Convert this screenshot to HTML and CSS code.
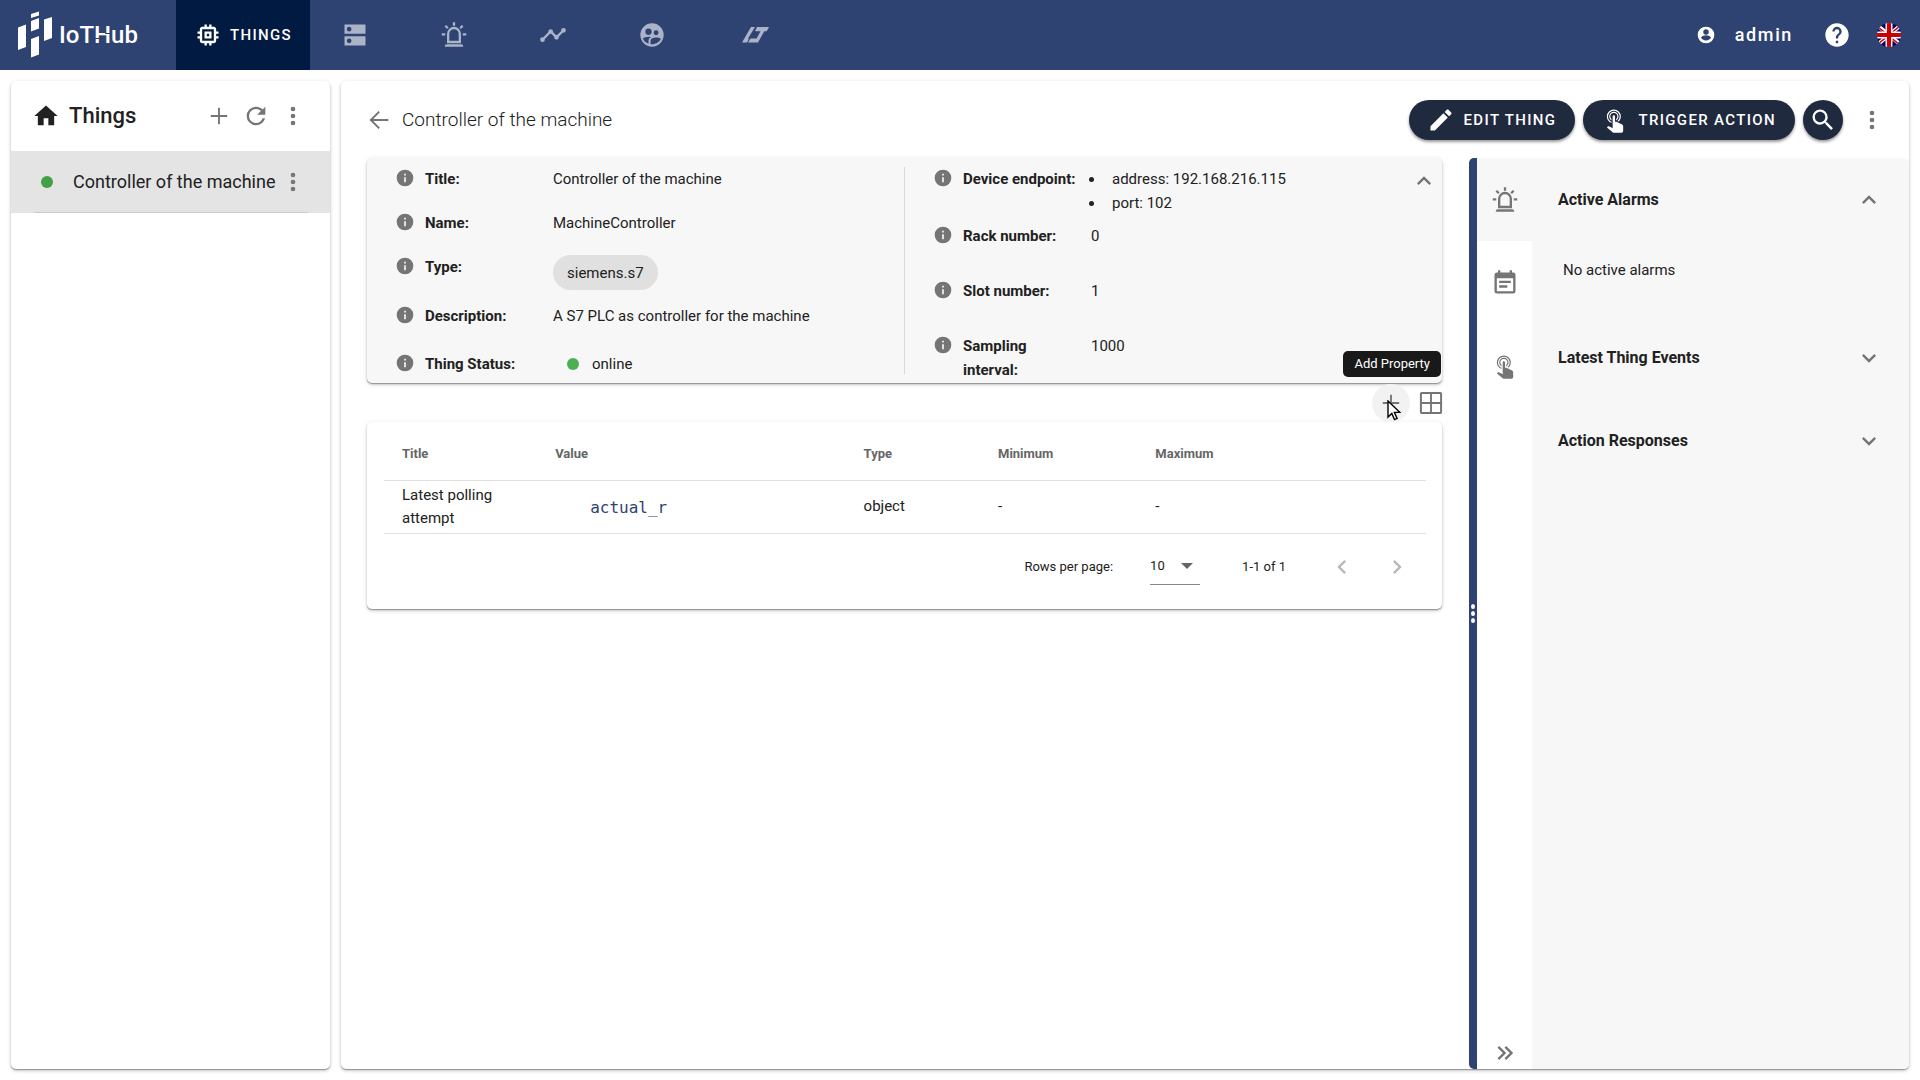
FILE: index.html
```html
<!DOCTYPE html>
<html lang="en">
<head>
<meta charset="utf-8">
<title>IoTHub</title>
<link rel="stylesheet" href="styles.css">
</head>
<body>
<svg class="defs" aria-hidden="true">
  <symbol id="alarm" viewBox="0 0 24 24"><path d="M6 6.900 3.870 4.780l1.410-1.410L7.400 5.500zM13 1v3h-2V1zm7.130 3.780L18 6.900l-1.400-1.400 2.120-2.130zM4.500 10.500v2h-3v-2zm15 0h3v2h-3zM6 20h12a2 2 0 0 1 2 2H4a2 2 0 0 1 2-2m6-15a6 6 0 0 1 6 6v8H6v-8a6 6 0 0 1 6-6m0 2a4 4 0 0 0-4 4v6h8v-6a4 4 0 0 0-4-4z"/></symbol>
  <symbol id="dots" viewBox="0 0 24 24"><path d="M12 16a2 2 0 0 1 2 2 2 2 0 0 1-2 2 2 2 0 0 1-2-2 2 2 0 0 1 2-2m0-6a2 2 0 0 1 2 2 2 2 0 0 1-2 2 2 2 0 0 1-2-2 2 2 0 0 1 2-2m0-6a2 2 0 0 1 2 2 2 2 0 0 1-2 2 2 2 0 0 1-2-2 2 2 0 0 1 2-2z"/></symbol>
  <symbol id="info" viewBox="0 0 24 24"><path d="M13 9h-2V7h2m0 10h-2v-6h2m-1-9A10 10 0 0 0 2 12a10 10 0 0 0 10 10 10 10 0 0 0 10-10A10 10 0 0 0 12 2z"/></symbol>
  <symbol id="plus" viewBox="0 0 24 24"><path d="M19 12.800h-6.200V19h-1.600v-6.200H5v-1.600h6.200V5h1.600v6.200H19z"/></symbol>
  <symbol id="tap" viewBox="0 0 24 24"><path d="M10 9a1 1 0 0 1 1-1 1 1 0 0 1 1 1v4.470l1.210.13 4.940 2.190c.53.240.850.770.850 1.350v4.360c-.03.820-.68 1.470-1.500 1.500H11c-.380 0-.74-.15-1-.43l-4.900-4.200.74-.77c.190-.210.460-.320.740-.320h.22L10 19zm1-4a4 4 0 0 1 4 4c0 1.500-.8 2.770-2 3.460v-1.220c.610-.550 1-1.350 1-2.240a3 3 0 0 0-3-3 3 3 0 0 0-3 3c0 .890.390 1.690 1 2.240v1.220C7.800 11.770 7 10.500 7 9a4 4 0 0 1 4-4m0-2a6 6 0 0 1 6 6c0 1.700-.71 3.230-1.840 4.330l-1-.45A5.019 5.019 0 0 0 16 9a5 5 0 0 0-5-5 5 5 0 0 0-5 5c0 2.050 1.230 3.810 3 4.580v1.080C6.670 13.830 5 11.610 5 9a6 6 0 0 1 6-6z"/></symbol>
  <symbol id="up" viewBox="0 0 24 24"><path d="M7.410 15.410 12 10.830l4.590 4.580L18 14l-6-6-6 6z"/></symbol>
  <symbol id="down" viewBox="0 0 24 24"><path d="M7.410 8.580 12 13.170l4.590-4.590L18 10l-6 6-6-6z"/></symbol>
</svg>

<header class="topbar">
  <a class="logo" href="#" aria-label="IoTHub">
    <svg class="mark" viewBox="0 0 36 48" aria-hidden="true"><path d="M0 16.500l8-3v22.500l-8 3zM13 3l8-2.500v4L13 7zM13 10l8-3v10.500l-8 3zM26 8.500L34 6v21l-8 3zM13 28l8-3v18.500l-8 3z"/></svg>
    <span class="word">IoT<span class="cut">H</span>ub</span>
  </a>
  <nav class="tabs">
    <a class="tab active" href="#"><svg class="icon" viewBox="0 0 24 24"><path d="M17 17H7V7h10m4 4V9h-2V7c0-1.110-.9-2-2-2h-2V3h-2v2h-2V3H9v2H7c-1.110 0-2 .890-2 2v2H3v2h2v2H3v2h2v2a2 2 0 0 0 2 2h2v2h2v-2h2v2h2v-2h2a2 2 0 0 0 2-2v-2h2v-2h-2v-2m-6 2h-2v-2h2m2-2H9v6h6z"/></svg>THINGS</a>
    <a class="tab" href="#" aria-label="Devices"><svg class="icon" viewBox="0 0 24 24"><path fill-rule="evenodd" d="M3 3h18v8H3zm4 2a2 2 0 1 0 0 4 2 2 0 0 0 0-4zM3 13h18v8H3zm4 2a2 2 0 1 0 0 4 2 2 0 0 0 0-4z"/></svg></a>
    <a class="tab" href="#" aria-label="Alarms"><svg class="icon"><use href="#alarm"/></svg></a>
    <a class="tab" href="#" aria-label="Trends"><svg class="icon" viewBox="0 0 24 24"><path d="M23 8a2 2 0 0 1-2 2c-.180 0-.350-.02-.510-.07l-3.560 3.550c.05.160.07.340.07.520a2 2 0 0 1-4 0c0-.180.020-.360.070-.520l-2.550-2.550c-.160.050-.340.070-.520.070s-.360-.020-.520-.070l-4.550 4.560c.050.160.070.330.070.510a2 2 0 1 1-2-2c.180 0 .350.020.510.070l4.560-4.550C8.020 9.360 8 9.180 8 9a2 2 0 0 1 4 0c0 .180-.020.360-.070.520l2.550 2.550c.160-.050.340-.070.520-.070s.360.020.520.070l3.550-3.560C19.020 8.350 19 8.180 19 8a2 2 0 0 1 4 0z"/></svg></a>
    <a class="tab" href="#" aria-label="Users"><svg class="icon" viewBox="0 0 24 24"><path fill-rule="evenodd" d="M12 2a10 10 0 1 0 0 20 10 10 0 0 0 0-20zM9 6.500a2.700 2.700 0 1 1 0 5.400 2.700 2.700 0 0 1 0-5.400zm6.500 1.500a2.100 2.100 0 1 1 0 4.200 2.100 2.100 0 0 1 0-4.200zM4.200 15c1-1 3-1.600 4.800-1.600l2.200.4C9.800 14.600 9 15.600 9 17v2.400C6.800 18.700 5 17 4.200 15zm6.600 4.900V17c0-3.300 6.700-3.500 8.800-1.700-1.200 2.700-4 4.700-7.600 4.700z"/></svg></a>
    <a class="tab" href="#" aria-label="Flows"><svg class="flow" viewBox="0 0 27 16"><path d="M9 0h4L6 11.500h1L5 15.500H0zM8.500 11.500H16l-2 4H6zM15 0h12l-2.300 4.300h-2.400L16 15.500h-3.500l6-11.200H13z"/></svg></a>
  </nav>
  <div class="account">
    <button class="user"><svg class="icon s20" viewBox="0 0 24 24"><path fill-rule="evenodd" d="M12 2a10 10 0 1 0 0 20 10 10 0 0 0 0-20zm0 3a3.300 3.300 0 1 1 0 6.600A3.300 3.300 0 0 1 12 5zm0 13.500c-3 0-5-1.500-6-3.500 1-1.800 4-2.600 6-2.600s5 .8 6 2.600c-1 2-3 3.500-6 3.500z"/></svg>admin</button>
    <button aria-label="Help"><svg class="icon" viewBox="0 0 24 24"><path d="M15.070 11.250l-.9.920C13.450 12.890 13 13.500 13 15h-2v-.5c0-1.110.450-2.110 1.170-2.830l1.240-1.260c.370-.360.590-.860.590-1.410a2 2 0 0 0-2-2 2 2 0 0 0-2 2H8a4 4 0 0 1 4-4 4 4 0 0 1 4 4 3.200 3.200 0 0 1-.930 2.250M13 19h-2v-2h2M12 2A10 10 0 0 0 2 12a10 10 0 0 0 10 10 10 10 0 0 0 10-10c0-5.530-4.500-10-10-10z"/></svg></button>
    <button aria-label="Language: English"><svg class="flag" viewBox="0 0 24 24"><clipPath id="round"><circle cx="12" cy="12" r="12"/></clipPath><g clip-path="url(#round)"><path fill="#006" d="M0 0h24v24H0z"/><path stroke="#fff" stroke-width="4" d="M0 2l24 20M24 2L0 22"/><path stroke="#c00" stroke-width="1.400" d="M0 3l24 20M24 2L0 22"/><path stroke="#fff" stroke-width="7" d="M12 0v24M0 12h24"/><path stroke="#c00" stroke-width="4.200" d="M12 0v24M0 12h24"/></g></svg></button>
  </div>
</header>

<div class="workspace">
  <aside class="sidebar card">
    <div class="side-head">
      <svg class="icon home" viewBox="0 0 24 24"><path d="M10 20v-6h4v6h5v-8h3L12 3 2 12h3v8z"/></svg>
      <h1>Things</h1>
      <button aria-label="Add thing"><svg class="icon"><use href="#plus"/></svg></button>
      <button aria-label="Refresh"><svg class="icon" viewBox="0 0 24 24"><path d="M17.650 6.350C16.200 4.900 14.210 4 12 4a8 8 0 0 0-8 8 8 8 0 0 0 8 8c3.730 0 6.840-2.550 7.730-6h-2.080A5.990 5.990 0 0 1 12 18a6 6 0 0 1-6-6 6 6 0 0 1 6-6c1.660 0 3.140.690 4.220 1.780L13 11h7V4z"/></svg></button>
      <button aria-label="More"><svg class="icon"><use href="#dots"/></svg></button>
    </div>
    <ul class="things">
      <li><span class="dot"></span><a href="#">Controller of the machine</a><button aria-label="Thing menu"><svg class="icon"><use href="#dots"/></svg></button></li>
    </ul>
  </aside>

  <main class="main card">
    <div class="main-head">
      <button aria-label="Back"><svg class="icon" viewBox="0 0 24 24"><path d="M20 11.200v1.600H7l5.800 5.800-1.200 1.200L3.800 12l7.800-7.800 1.200 1.200L7 11.200z"/></svg></button>
      <h2>Controller of the machine</h2>
      <button class="pill"><svg class="icon" viewBox="0 0 24 24"><path d="M20.710 7.040c.390-.390.390-1.040 0-1.410l-2.340-2.340c-.370-.390-1.020-.390-1.410 0l-1.840 1.830 3.750 3.750M3 17.250V21h3.750L17.810 9.930l-3.750-3.750z"/></svg>EDIT THING</button>
      <button class="pill"><svg class="icon"><use href="#tap"/></svg>TRIGGER ACTION</button>
      <button class="round" aria-label="Search"><svg class="icon" viewBox="0 0 24 24"><path d="M9.500 3A6.500 6.500 0 0 1 16 9.500c0 1.610-.590 3.090-1.560 4.230l.270.270h.790l5 5-1.500 1.500-5-5v-.790l-.270-.270A6.516 6.516 0 0 1 9.500 16 6.500 6.500 0 0 1 3 9.500 6.500 6.500 0 0 1 9.500 3m0 2C7 5 5 7 5 9.500S7 14 9.500 14 14 12 14 9.500 12 5 9.500 5z"/></svg></button>
      <button class="more" aria-label="More"><svg class="icon"><use href="#dots"/></svg></button>
    </div>

    <div class="body">
      <div class="content">
        <section class="details card">
          <dl class="left">
            <div><dt><svg class="icon s20"><use href="#info"/></svg>Title:</dt><dd>Controller of the machine</dd></div>
            <div><dt><svg class="icon s20"><use href="#info"/></svg>Name:</dt><dd>MachineController</dd></div>
            <div class="type"><dt><svg class="icon s20"><use href="#info"/></svg>Type:</dt><dd><span class="chip">siemens.s7</span></dd></div>
            <div class="desc"><dt><svg class="icon s20"><use href="#info"/></svg>Description:</dt><dd>A S7 PLC as controller for the machine</dd></div>
            <div><dt><svg class="icon s20"><use href="#info"/></svg>Thing Status:</dt><dd class="status"><span class="dot"></span>online</dd></div>
          </dl>
          <dl class="right">
            <div class="endpoint"><dt><svg class="icon s20"><use href="#info"/></svg>Device endpoint:</dt><dd><ul><li>address: 192.168.216.115</li><li>port: 102</li></ul></dd></div>
            <div><dt><svg class="icon s20"><use href="#info"/></svg>Rack number:</dt><dd>0</dd></div>
            <div><dt><svg class="icon s20"><use href="#info"/></svg>Slot number:</dt><dd>1</dd></div>
            <div><dt><svg class="icon s20"><use href="#info"/></svg>Sampling interval:</dt><dd>1000</dd></div>
          </dl>
          <button class="collapse" aria-label="Collapse details"><svg class="icon"><use href="#up"/></svg></button>
        </section>

        <div class="tools">
          <button class="add" aria-label="Add Property" aria-describedby="tip"><svg class="icon"><use href="#plus"/></svg></button>
          <span class="tooltip" id="tip" role="tooltip">Add Property</span>
          <svg class="pointer" viewBox="0 0 14 21" aria-hidden="true"><path d="M1 1v16l3.800-3.600 2.700 6.200 2.600-1.100-2.700-6.100H13z" fill="#fff" stroke="#000" stroke-width="1.400"/></svg>
          <button aria-label="Grid view"><svg class="icon" viewBox="0 0 24 24"><path fill-rule="evenodd" d="M4 2.500h16A1.500 1.500 0 0 1 21.500 4v16a1.500 1.500 0 0 1-1.500 1.500H4A1.500 1.500 0 0 1 2.500 20V4A1.500 1.500 0 0 1 4 2.500zM4.200 4.200v7h7v-7zm8.600 0v7h7v-7zm-8.600 8.600v7h7v-7zm8.600 0v7h7v-7z"/></svg></button>
        </div>

        <section class="props card">
          <table>
            <thead><tr><th class="c-title">Title</th><th class="c-value">Value</th><th class="c-type">Type</th><th class="c-min">Minimum</th><th>Maximum</th></tr></thead>
            <tbody><tr><td>Latest polling attempt</td><td><code>actual_r</code></td><td>object</td><td>-</td><td>-</td></tr></tbody>
          </table>
          <div class="pager">
            <label for="rows">Rows per page:</label>
            <span class="select"><select id="rows"><option>10</option></select></span>
            <span class="range">1-1 of 1</span>
            <button disabled aria-label="Previous page"><svg class="icon" viewBox="0 0 24 24"><path d="M15.410 16.580 10.830 12l4.580-4.590L14 6l-6 6 6 6z"/></svg></button>
            <button disabled aria-label="Next page"><svg class="icon" viewBox="0 0 24 24"><path d="M8.590 16.580 13.170 12 8.590 7.410 10 6l6 6-6 6z"/></svg></button>
          </div>
        </section>
      </div>

      <aside class="drawer">
        <div class="splitter"><i></i><i></i><i></i></div>
        <nav class="rail">
          <button class="on" aria-label="Active alarms"><svg class="icon"><use href="#alarm"/></svg></button>
          <button aria-label="Events"><svg class="icon" viewBox="0 0 24 24"><path d="M14 14H7v2h7m5 3H5V8h14m0-5h-1V1h-2v2H8V1H6v2H5c-1.110 0-2 .890-2 2v14a2 2 0 0 0 2 2h14a2 2 0 0 0 2-2V5a2 2 0 0 0-2-2m-2 7H7v2h10z"/></svg></button>
          <button aria-label="Actions"><svg class="icon"><use href="#tap"/></svg></button>
          <button class="hide" aria-label="Hide panel"><svg class="icon" viewBox="0 0 24 24"><path d="M5.590 7.410 7 6l6 6-6 6-1.410-1.410L10.170 12zm6 0L13 6l6 6-6 6-1.410-1.410L16.170 12z"/></svg></button>
        </nav>
        <div class="panels">
          <section><h3>Active Alarms</h3><button aria-label="Collapse"><svg class="icon"><use href="#up"/></svg></button></section>
          <p>No active alarms</p>
          <section><h3>Latest Thing Events</h3><button aria-label="Expand"><svg class="icon"><use href="#down"/></svg></button></section>
          <section><h3>Action Responses</h3><button aria-label="Expand"><svg class="icon"><use href="#down"/></svg></button></section>
        </div>
      </aside>
    </div>
  </main>
</div>
</body>
</html>
```
FILE: styles.css
```css
* { box-sizing: border-box; margin: 0; padding: 0; }
body {
  min-height: 100vh;
  display: flex;
  flex-direction: column;
  background: #fff;
  color: #212121;
  font: 15px/24px Roboto, sans-serif;
}
.defs { display: none; }
a { color: inherit; text-decoration: none; }
button { background: none; border: 0; font: inherit; color: #757575; display: flex; align-items: center; }
ul { list-style: none; }
.icon { width: 28px; height: 28px; fill: currentColor; flex: none; display: block; }
.s20 { width: 20px; height: 20px; }
.card {
  background: #fff;
  border-radius: 5px;
  box-shadow: 0 1px 1px rgba(0,0,0,.3), 0 2px 3px rgba(0,0,0,.14), 0 1px 5px rgba(0,0,0,.1);
}
.dot { width: 12px; height: 12px; border-radius: 50%; background: #43a047; flex: none; }

.topbar { height: 70px; background: #2e4372; color: #fff; display: flex; }
.logo { width: 176px; padding-left: 18px; display: flex; align-items: center; gap: 5px; }
.mark { width: 36px; height: 48px; fill: #fff; }
.word { font: 500 24px/32px Roboto, sans-serif; }
/* breaks in the stems of the wordmark's H */
.cut { position: relative; display: inline-block; }
.cut::before, .cut::after { content: ""; position: absolute; width: 5px; height: 1px; background: #2e4372; }
.cut::before { left: 1px; top: 19px; }
.cut::after { right: 1px; top: 14px; }
.tabs { display: flex; }
.tab { width: 99px; display: flex; align-items: center; justify-content: center; color: #abb4c7; }
.tab:last-child { width: 108px; }
.tab.active { width: 134px; gap: 8px; background: #001a41; color: #fff; font-weight: 500; letter-spacing: .09em; margin-right: -5px; }
.flow { width: 27px; height: 16px; fill: currentColor; }
.account { margin-left: auto; padding-right: 19px; display: flex; align-items: center; gap: 26px; }
.account button { color: #fff; }
.account .user { gap: 19px; margin-right: 4px; font-size: 18px; font-weight: 500; letter-spacing: .09em; }
.flag { width: 24px; height: 24px; display: block; }

.workspace { flex: 1; display: grid; grid-template-columns: 319px 1fr; gap: 11px; padding: 11px; }
.side-head { height: 70px; display: flex; align-items: center; padding: 0 23px 0 21px; gap: 9px; }
.side-head h1 { font-size: 22px; font-weight: 500; margin-right: auto; }
.home { color: #212121; }
.things li {
  height: 62px;
  display: flex;
  align-items: center;
  padding: 0 23px 0 30px;
  background: linear-gradient(#ccc, #ccc) 23px 100% / calc(100% - 45px) 1px no-repeat, #e4e4e4;
  font-size: 18px;
}
.things .dot { margin-right: 20px; }
.things a { flex: 1; white-space: nowrap; }

.main { display: flex; flex-direction: column; }
.main-head { height: 77px; display: flex; align-items: center; padding: 0 23px 0 24px; }
.main-head h2 { font: 300 19px/24px "Roboto Light", Roboto, sans-serif; margin: 0 auto 0 9px; }
.pill { height: 40px; padding: 0 19px 0 18px; gap: 9px; margin-right: 8px; border-radius: 20px; background: #202a3f; color: #fff; font-weight: 500; letter-spacing: .09em; box-shadow: 0 2px 3px rgba(0,0,0,.4); }
.round { width: 40px; height: 40px; justify-content: center; border-radius: 50%; background: #202a3f; color: #fff; box-shadow: 0 2px 3px rgba(0,0,0,.4); }
.more { margin-left: 15px; }

.body { flex: 1; display: flex; }
.content { flex: 1; padding: 0 27px 0 26px; }
.details { display: flex; background: #f7f7f7; height: 225px; padding: 9px 0; }
.left { flex: 1; padding-left: 28px; border-right: 1px solid #d8d8d8; }
.right { flex: 1; padding-left: 28px; }
.details dl > div { display: flex; height: 44px; }
.left > .type { height: 49px; }
.left > .desc { height: 48px; }
.details .right > div { height: 55px; }
.details .right > .endpoint { height: 57px; }
.details dt { width: 158px; font-weight: 700; padding: 0 10px 0 30px; position: relative; }
.details dt .icon { position: absolute; left: 0; top: 1px; color: #757575; }
.chip { display: flex; align-items: center; height: 35px; padding: 0 14px; border-radius: 18px; background: #e0e0e0; }
.status { display: flex; align-items: center; height: 24px; gap: 13px; padding-left: 14px; }
.details .dot { background: #4caf50; }
.right ul { list-style: disc; padding-left: 14px; }
.right li { padding-left: 7px; }
.collapse { align-self: flex-start; margin: 0 4px 0 -32px; }

.tools { position: relative; height: 39px; display: flex; justify-content: flex-end; align-items: center; gap: 7px; }
.tools > button:last-child { margin-right: -3px; }
.add { width: 38px; height: 38px; justify-content: center; border-radius: 50%; background: #f2f2f2; }
.tooltip { position: absolute; right: 1px; bottom: 45px; padding: 1px 11px; border-radius: 5px; background: #191919; color: #fff; font-size: 13px; }
.pointer { position: absolute; right: 41px; top: 17px; width: 14px; height: 21px; }

.props { padding: 0 16px 18px 17px; height: 187px; }
table { width: 100%; table-layout: fixed; border-collapse: collapse; line-height: 23px; }
th, td { text-align: left; padding: 0 18px; border-bottom: 1px solid #e0e0e0; }
th { height: 58px; padding-top: 6px; font-size: 13px; font-weight: 700; color: #666; }
td { height: 53px; }
.c-title { width: 14.7%; }
.c-value { width: 29.6%; }
.c-type { width: 12.9%; }
.c-min { width: 15.1%; }
code { display: block; font: 16px/22px "DejaVu Sans Mono", monospace; color: #2e4372; padding: 3px 0 0 35px; }
.pager { height: 66px; display: flex; align-items: center; justify-content: flex-end; font-size: 13px; padding-right: 15px; }
.select { margin: 0 42px 0 37px; width: 50px; height: 36px; border-bottom: 1px solid #888; display: flex; align-items: center; position: relative; }
.select::after { content: ""; position: absolute; right: 7px; border: 6px solid transparent; border-top-color: #666; border-bottom: 0; }
select { appearance: none; border: 0; background: none; font: inherit; color: inherit; width: 100%; }
.range { margin-right: 42px; }
.pager button { color: #b8b8b8; }
.pager button + button { margin-left: 27px; }

.drawer { width: 440px; display: flex; background: #f7f7f7; border-radius: 5px; overflow: hidden; }
.splitter { width: 8px; background: #2e4372; display: flex; flex-direction: column; align-items: center; justify-content: center; gap: 2px; }
.splitter i { width: 4px; height: 5px; border-radius: 50%; background: #fff; }
.rail { width: 55px; background: #fff; display: flex; flex-direction: column; }
.rail button { height: 83px; justify-content: center; }
.rail .on { background: #f7f7f7; }
.rail .hide { margin-top: auto; height: 32px; }
.panels { flex: 1; padding-left: 26px; }
.panels section { height: 83px; display: flex; align-items: center; justify-content: space-between; padding-right: 26px; }
.panels h3 { font-size: 16px; font-weight: 700; }
.panels p { padding: 17px 5px 34px; }
```
